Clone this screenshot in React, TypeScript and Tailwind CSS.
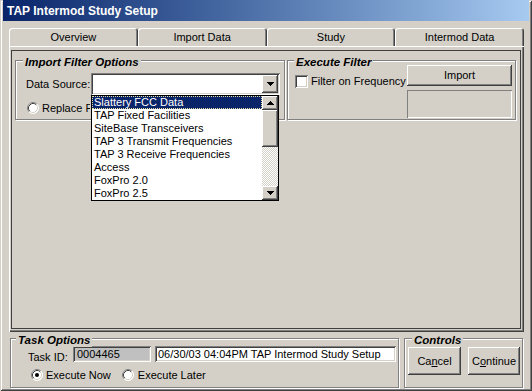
import React from "react";

const RAISED =
  "shadow-[inset_-1px_-1px_#404040,inset_1px_1px_#ffffff,inset_-2px_-2px_#808080,inset_2px_2px_#d4d0c8]";
const SUNKEN =
  "shadow-[inset_1px_1px_#808080,inset_-1px_-1px_#ffffff,inset_2px_2px_#404040,inset_-2px_-2px_#d4d0c8]";

function Arrow({ up }: { up?: boolean }) {
  const rows: [number, number][] = up
    ? [
        [3, 1],
        [2, 3],
        [1, 5],
        [0, 7],
      ]
    : [
        [0, 7],
        [1, 5],
        [2, 3],
        [3, 1],
      ];
  return (
    <svg width="7" height="4" shapeRendering="crispEdges">
      {rows.map(([x, w], i) => (
        <rect key={i} x={x} y={i} width={w} height={1} fill="#000" />
      ))}
    </svg>
  );
}

function Radio({ checked }: { checked?: boolean }) {
  return (
    <svg width="12" height="12" viewBox="0 0 12 12" className="shrink-0">
      <circle cx="6" cy="6" r="5.5" fill="#fff" />
      <path d="M9.89 2.11 A5.5 5.5 0 0 0 2.11 9.89" stroke="#808080" fill="none" />
      <path d="M9.18 2.82 A4.5 4.5 0 0 0 2.82 9.18" stroke="#404040" fill="none" />
      <path d="M2.11 9.89 A5.5 5.5 0 0 0 9.89 2.11" stroke="#ffffff" fill="none" />
      <path d="M2.82 9.18 A4.5 4.5 0 0 0 9.18 2.82" stroke="#d4d0c8" fill="none" />
      {checked && <circle cx="6" cy="6" r="2" fill="#000" />}
    </svg>
  );
}

function Group({
  title,
  className,
  titleLeft,
  children,
}: {
  title: string;
  className: string;
  titleLeft: string;
  children?: React.ReactNode;
}) {
  return (
    <div
      className={`relative shrink-0 border border-[#808080] shadow-[inset_1px_1px_#ffffff,1px_1px_#ffffff] ${className}`}
    >
      <span
        className={`absolute -top-[5px] ${titleLeft} px-[2px] bg-[#d4d0c8] font-bold italic text-[11.5px] leading-[13px] whitespace-nowrap`}
      >
        {title}
      </span>
      {children}
    </div>
  );
}

const ITEMS = [
  "Slattery FCC Data",
  "TAP Fixed Facilities",
  "SiteBase Transceivers",
  "TAP 3 Transmit Frequencies",
  "TAP 3 Receive Frequencies",
  "Access",
  "FoxPro 2.0",
  "FoxPro 2.5",
];

export default function App() {
  return (
    <div className="w-[532px] h-[391px] bg-[#d4d0c8] flex flex-col px-[3px] pb-[3px] shadow-[inset_1px_1px_#d4d0c8,inset_-1px_-1px_#404040,inset_2px_2px_#ffffff,inset_-2px_-2px_#808080] font-['Liberation_Sans',Arial,sans-serif] text-[11px] leading-[13px] text-black overflow-hidden">
      {/* Title bar */}
      <div className="h-[21px] shrink-0 bg-linear-to-r from-[#0a246a] to-[#a6caf0] flex items-center pl-[4px] pt-[2px] text-white font-bold text-[12px] whitespace-nowrap">
        TAP Intermod Study Setup
      </div>

      <div className="flex flex-col pl-[6px] pr-[5px] pt-[7px]">
        {/* Tabs */}
        <div className="flex h-[18px]">
          {["Overview", "Import Data", "Study", "Intermod Data"].map((t) => (
            <div
              key={t}
              className="flex-1 flex items-center justify-center rounded-t-[3px] shadow-[inset_1px_1px_#ffffff,inset_-1px_0_#404040,inset_-2px_0_#808080]"
            >
              {t}
            </div>
          ))}
        </div>

        {/* Tab panel */}
        <div className="h-[286px] flex flex-col pl-[2px] pt-[4px] pr-[3px] pb-[3px] shadow-[inset_1px_1px_#ffffff,inset_-1px_-1px_#404040,inset_-2px_-2px_#808080]">
          <div className="flex-1 border border-[#404040] pl-[3px] pr-[4px] pt-[9px]">
            <div className="flex gap-[2px]">
              {/* Import Filter Options */}
              <Group title="Import Filter Options" titleLeft="left-[7px]" className="w-[270px] h-[60px] z-10">
                <div className="pt-[12px] pl-[10px]">
                  <div className="flex items-center h-[22px]">
                    <span className="w-[65px] whitespace-nowrap">Data Source:</span>
                    <div className={`relative w-[189px] h-[22px] bg-white ${SUNKEN}`}>
                      <div
                        className={`absolute right-[2px] top-[2px] w-[16px] h-[18px] bg-[#d4d0c8] ${RAISED} flex items-center justify-center`}
                      >
                        <Arrow />
                      </div>
                      {/* Dropdown list */}
                      <div className="absolute left-0 top-[22px] z-20 w-[188px] h-[106px] border border-black bg-white flex">
                        <div className="flex-1 flex flex-col">
                          {ITEMS.map((it, i) => (
                            <div
                              key={it}
                              className={`h-[13px] pl-[2px] whitespace-nowrap ${
                                i === 0
                                  ? "bg-[#0a246a] text-white outline-1 outline-dotted outline-[#e8e0a0] -outline-offset-1"
                                  : ""
                              }`}
                            >
                              {it}
                            </div>
                          ))}
                        </div>
                        <div className="w-[16px] flex flex-col">
                          <div
                            className={`h-[14px] bg-[#d4d0c8] ${RAISED} flex items-center justify-center`}
                          >
                            <Arrow up />
                          </div>
                          <div className={`h-[37px] bg-[#d4d0c8] ${RAISED}`} />
                          <div className="flex-1 bg-[image:repeating-conic-gradient(#ffffff_0%_25%,#d4d0c8_0%_50%)] bg-[length:2px_2px]" />
                          <div
                            className={`h-[14px] bg-[#d4d0c8] ${RAISED} flex items-center justify-center`}
                          >
                            <Arrow />
                          </div>
                        </div>
                      </div>
                    </div>
                  </div>
                  <div className="flex items-center h-[12px] mt-[7px] pl-[1px] gap-[3px]">
                    <Radio />
                    <span className="w-[48px] overflow-hidden whitespace-nowrap">Replace Frequencies</span>
                  </div>
                </div>
              </Group>

              {/* Execute Filter */}
              <Group title="Execute Filter" titleLeft="left-[6px]" className="w-[229px] h-[60px]">
                <div className="flex pt-[4px] pl-[7px] pr-[3px]">
                  <div className="flex-1 flex items-center h-[13px] mt-[10px] gap-[3px]">
                    <div className={`w-[13px] h-[13px] bg-white shrink-0 ${SUNKEN}`} />
                    <span className="whitespace-nowrap">Filter on Frequency</span>
                  </div>
                  <div className="w-[105px] flex flex-col gap-[4px]">
                    <div className={`h-[21px] ${RAISED} flex items-center justify-center`}>Import</div>
                    <div className="h-[28px] shadow-[inset_1px_1px_#808080,inset_-1px_-1px_#ffffff]" />
                  </div>
                </div>
              </Group>
            </div>
          </div>
        </div>

        {/* Bottom row */}
        <div className="flex mt-[6px] ml-[1px] gap-[5px] h-[50px]">
          <Group title="Task Options" titleLeft="left-[5px]" className="w-[389px] h-[50px]">
            <div className="pt-[7px] pl-[17px]">
              <div className="flex items-start h-[16px]">
                <span className="w-[45px] mt-[5px] whitespace-nowrap">Task ID:</span>
                <div className={`w-[78px] h-[16px] bg-[#c0c0c0] ${SUNKEN} pl-[4px] flex items-center`}>
                  0004465
                </div>
                <div
                  className={`ml-[4px] w-[241px] h-[16px] bg-white ${SUNKEN} pl-[3px] flex items-center whitespace-nowrap`}
                >
                  06/30/03 04:04PM TAP Intermod Study Setup
                </div>
              </div>
              <div className="flex items-center h-[12px] mt-[7px] pl-[3px]">
                <Radio checked />
                <span className="ml-[3px] whitespace-nowrap">Execute Now</span>
                <span className="ml-[11px] flex">
                  <Radio />
                </span>
                <span className="ml-[4px] whitespace-nowrap">Execute Later</span>
              </div>
            </div>
          </Group>

          <Group title="Controls" titleLeft="left-[7px]" className="w-[119px] h-[50px]">
            <div className="flex pt-[8px] pl-[3px] gap-[7px]">
              <div className={`w-[53px] h-[28px] ${RAISED} flex items-center justify-center`}>
                Ca<span className="underline underline-offset-[1px]">n</span>cel
              </div>
              <div className={`w-[52px] h-[28px] ${RAISED} flex items-center justify-center`}>
                C<span className="underline underline-offset-[1px]">o</span>ntinue
              </div>
            </div>
          </Group>
        </div>
      </div>
    </div>
  );
}
